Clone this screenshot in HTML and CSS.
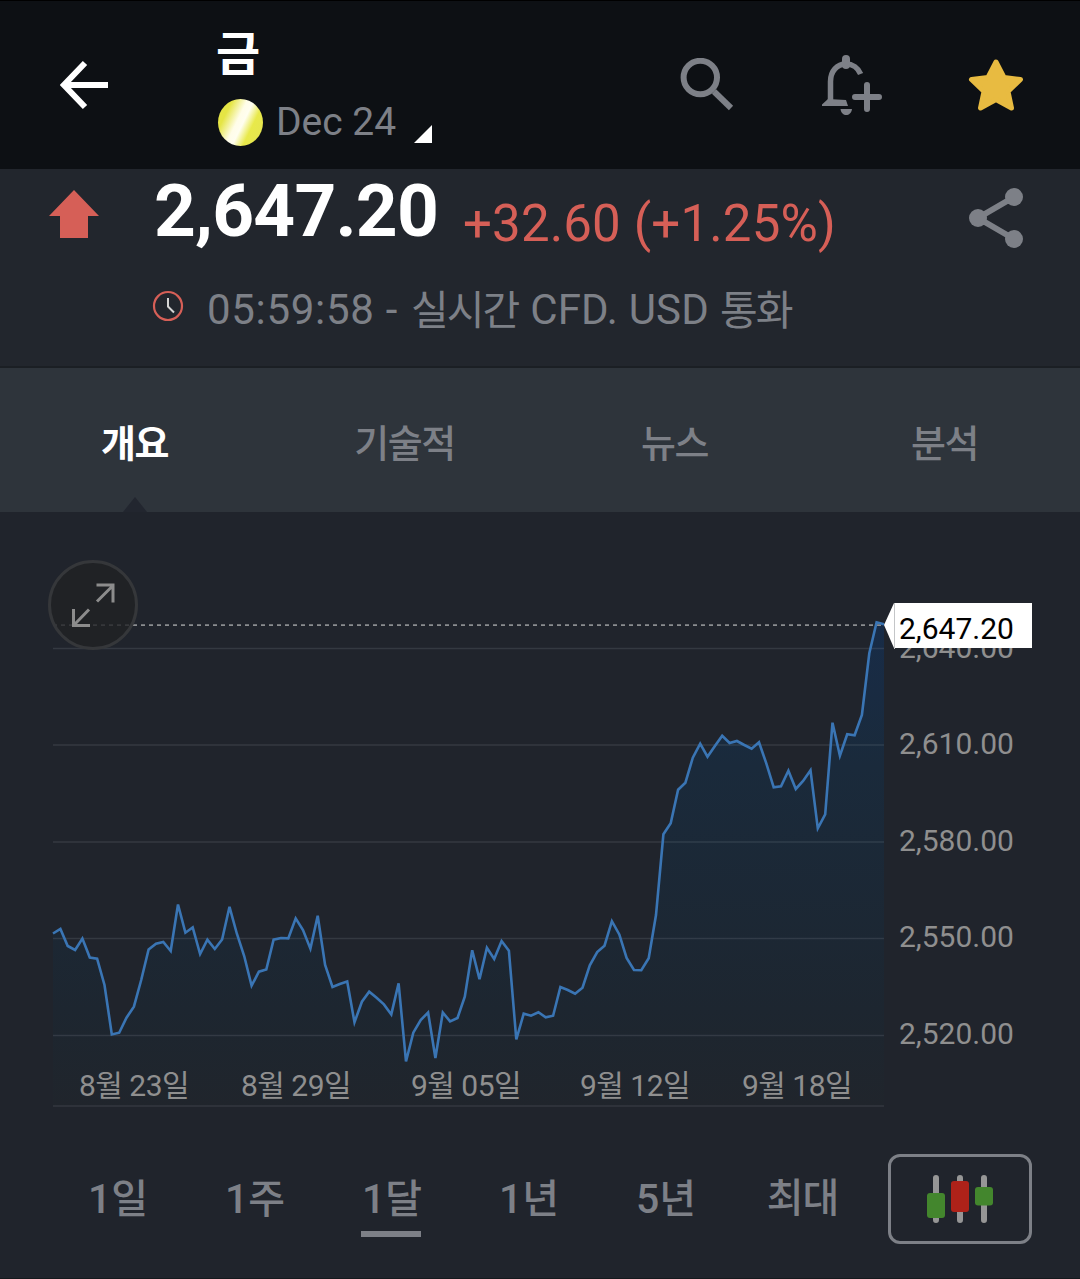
FILE: index.html
```
<!DOCTYPE html>
<html lang="ko">
<head>
    <meta charset="utf-8">
    <title>금 - Dec 24</title>
    <link rel="stylesheet" href="styles.css">
</head>
<body>
    <header class="topbar">
        <svg class="back" width="50" height="50" viewBox="0 0 50 50">
            <path d="M48 25H5M25 3L4 25l21 22" fill="none" stroke="#fff" stroke-width="6"/>
        </svg>
        <div class="instrument">
            <h1 class="name">금</h1>
            <div class="contract">
                <span class="coin"></span>
                <span class="month">Dec 24</span>
                <svg class="corner" width="18" height="18" viewBox="0 0 18 18"><path d="M18 0v18H0z" fill="#fff"/></svg>
            </div>
        </div>
        <div class="actions">
            <svg width="56" height="54" viewBox="0 0 56 54" fill="none" stroke="#7d8087">
                <circle cx="20.300" cy="19.500" r="16.700" stroke-width="6"/>
                <path d="M34 33.500L51 50" stroke-width="6"/>
            </svg>
            <svg class="bell" width="60" height="60" viewBox="0 0 60 60">
                <g fill="none" stroke="#7d8087">
                    <path d="M8.500 47V26.500C8.500 16 15 9 24 9c6.500 0 12.200 4 14.600 10" stroke-width="5.500"/>
                    <path d="M24 4v6" stroke-width="8" stroke-linecap="round"/>
                    <path d="M45 30v24M33 42h24" stroke-width="6" stroke-linecap="round"/>
                </g>
                <path d="M6 44L0 49.500V51h26l-2-6zM18.500 54h11.500c-1 8-10.500 8-11.500 0z" fill="#7d8087"/>
            </svg>
            <svg width="56" height="54" viewBox="0 0 56 54">
                <path d="M28 4l8 15.500 16.500 2-12.500 12 3.500 16.500-15.500-8.500-15.500 8.500L16 33.500l-12.500-12 16.500-2z" fill="#e8bb41" stroke="#e8bb41" stroke-width="5" stroke-linejoin="round"/>
            </svg>
        </div>
    </header>

    <section class="quote">
        <svg class="up" width="50" height="48" viewBox="0 0 50 48"><path d="M25 0l25 26H39v22H11V26H0z" fill="#d65f57"/></svg>
        <div class="quote-info">
            <div class="price-row">
                <span class="price">2,647.20</span>
                <span class="change">+32.60 (+1.25%)</span>
            </div>
            <div class="status">
                <svg class="clock" width="32" height="32" viewBox="0 0 32 32" fill="none">
                    <circle cx="16" cy="16" r="14" stroke="#d65f57" stroke-width="2.200"/>
                    <path d="M16 8v8.500l6 6" stroke="#d5d5d5" stroke-width="2"/>
                </svg>
                <span class="time">05:59:58 -</span>
                <span class="status-ko">실시간</span>
                <span class="ccy">CFD. USD</span>
                <span class="status-ko">통화</span>
            </div>
        </div>
        <svg class="share" width="54" height="60" viewBox="0 0 54 60">
            <path d="M45 9L9 30l36 21" fill="none" stroke="#7d8087" stroke-width="6"/>
            <g fill="#7d8087"><circle cx="45" cy="9" r="9"/><circle cx="9" cy="30" r="9"/><circle cx="45" cy="51" r="9"/></g>
        </svg>
    </section>

    <nav class="tabs">
        <a class="tab active">개요</a>
        <a class="tab">기술적</a>
        <a class="tab">뉴스</a>
        <a class="tab">분석</a>
    </nav>

    <main class="chart">
        <!-- user units are page pixels, the box starts under the tabs -->
        <svg class="plot" width="1080" height="618" viewBox="0 512 1080 618">
            <defs>
                <linearGradient id="area" gradientUnits="userSpaceOnUse" x1="0" y1="622" x2="0" y2="1106">
                    <stop offset="0" stop-color="#182c48"/>
                    <stop offset="0.300" stop-color="#1a2a3b"/>
                    <stop offset="0.800" stop-color="#1d2630"/>
                    <stop offset="1" stop-color="#20252c"/>
                </linearGradient>
            </defs>
            <path id="fill" fill="url(#area)"/>
            <path d="M53 648.500H884M53 745H884M53 842H884M53 938.500H884M53 1035.500H884" stroke="#a0aab4" stroke-opacity=".16" stroke-width="1.300"/>
            <path d="M53 1106H884" stroke="#2e323a" stroke-width="2"/>
            <path d="M53 625.200H884" stroke="#8b8d90" stroke-width="1.800" stroke-dasharray="4 4"/>
            <polyline id="line" fill="none" stroke="#3a75b4" stroke-width="2.600"/>
            <g class="axis">
                <text x="899" y="658">2,640.00</text>
                <text x="899" y="754">2,610.00</text>
                <text x="899" y="851">2,580.00</text>
                <text x="899" y="947">2,550.00</text>
                <text x="899" y="1044">2,520.00</text>
            </g>
            <g class="axis dates">
                <text x="134" y="1096">8월 23일</text>
                <text x="296" y="1096">8월 29일</text>
                <text x="466" y="1096">9월 05일</text>
                <text x="635" y="1096">9월 12일</text>
                <text x="797" y="1096">9월 18일</text>
            </g>
            <path d="M884 625l10-22h138v45H894z" fill="#fff"/>
            <path d="M894.500 603v46" stroke="#c4c6c8"/>
            <text class="last" x="899" y="639">2,647.20</text>
        </svg>
        <button class="expand">
            <svg width="44" height="44" viewBox="0 0 44 44" fill="none" stroke="#8c8c8c" stroke-width="3">
                <path d="M25.500 2H42V19.500M42 2.500L26 18.500M2.500 26v16.500H19M3 42l15-15.500"/>
            </svg>
        </button>
    </main>

    <div class="ranges">
        <a class="range"><span class="num">1</span>일</a>
        <a class="range"><span class="num">1</span>주</a>
        <a class="range selected"><span class="num">1</span>달</a>
        <a class="range"><span class="num">1</span>년</a>
        <a class="range"><span class="num">5</span>년</a>
        <a class="range">최대</a>
        <button class="candles">
            <svg width="68" height="50" viewBox="0 0 68 50">
                <path d="M10 4v42M34 4v42M58 4v42" stroke="#969696" stroke-width="6" stroke-linecap="round"/>
                <rect x="1" y="19" width="18" height="25" rx="3" fill="#43862d"/>
                <rect x="25" y="7" width="18" height="31" rx="3" fill="#ae2219"/>
                <rect x="49" y="13" width="18" height="18.500" rx="3" fill="#43862d"/>
            </svg>
        </button>
    </div>

    <script>
        const points = [
            933.5, 929, 946, 950, 938.5, 957.5, 958.7, 985, 1034.5, 1032.7, 1017.7, 1006.7,
            980, 949.5, 943.7, 942, 951, 904.5, 932.7, 927.5, 954, 939.7, 949, 939.5,
            906.8, 933.5, 956, 985.7, 971.7, 969.5, 939.7, 938, 938.4, 918.4, 930, 948.7,
            915.7, 965, 987, 984, 981.4, 1022.3, 1001.7, 991.7, 997.7, 1004.4, 1014.4, 983.3,
            1061.5, 1032.7, 1020, 1012.5, 1058, 1012.5, 1021.4, 1018, 996.7, 950.2, 979.3, 947.7,
            959, 941, 950.7, 1039.5, 1013.7, 1015.7, 1012.2, 1017.3, 1015.7, 987, 990, 993.7,
            987.7, 965.3, 952, 945.7, 921.2, 934.4, 958, 970, 970.2, 958.3, 915, 834.3,
            823.3, 789.7, 782.7, 757.7, 743.7, 756.7, 746, 735.7, 743, 741, 745, 748.7,
            742.3, 763.3, 787.3, 786.3, 770.7, 789, 781, 770.3, 828.3, 814.3, 722.7, 755.7,
            734.3, 735.3, 715, 653.3, 622.3, 624.3
        ];
        const step = 831 / (points.length - 1);
        const line = points.map((y, i) => `${(53 + i * step).toFixed(1)},${y}`).join(' ');

        document.getElementById('line').setAttribute('points', line);
        document.getElementById('fill').setAttribute('d', `M53,1106 L${line} L884,1106 Z`);
    </script>
</body>
</html>
```
FILE: styles.css
```
body {
    margin: 0;
    width: 1080px;
    height: 1279px;
    overflow: hidden;
    background: #20242c;
    font-family: Roboto, "Noto Sans CJK KR", sans-serif;
    color: #7d8087;
}

svg {
    display: block;
    flex: none;
}

button {
    padding: 0;
    box-sizing: border-box;
    display: flex;
    align-items: center;
    justify-content: center;
}

.topbar {
    height: 169px;
    box-sizing: border-box;
    border-top: 1px solid #000;
    background: #0d1014;
    display: flex;
    align-items: flex-start;
}

.back {
    margin: 59px 0 0 60px;
}

.instrument {
    margin-left: 106px;
    width: 465px;
}

.name {
    margin: 26px 0 0;
    height: 55px;
    line-height: 56px;
    font-size: 48px;
    font-weight: bold;
    color: #fff;
}

.contract {
    display: flex;
    align-items: center;
    height: 80px;
}

.coin {
    width: 45px;
    height: 47px;
    margin-left: 2px;
    border-radius: 50%;
    background: linear-gradient(116deg, #e5e545 22%, #fffde8 44%, #fffef0 54%, #e8e94a 70%, #e4e452);
}

.month {
    margin-left: 13px;
    font-size: 39px;
    line-height: 48px;
    width: 127px;
}

.corner {
    margin: 24px 0 0 11px;
}

.actions {
    display: flex;
    align-items: center;
    margin: 54px 0 0 -1px;
}

.actions .bell {
    margin: 0 86px 0 86px;
}

.quote {
    height: 199px;
    box-sizing: border-box;
    border-bottom: 2px solid #1b1f24;
    background: #22262d;
    display: flex;
    align-items: flex-start;
}

.up {
    margin: 21px 0 0 49px;
}

.quote-info {
    margin-left: 53px;
    width: 817px;
}

.price-row {
    display: flex;
    align-items: flex-start;
    height: 109px;
}

.price {
    width: 309px;
    padding-left: 2px;
    line-height: 84px;
    font-size: 73px;
    font-weight: bold;
    letter-spacing: -0.800px;
    color: #fff;
}

.change {
    padding-top: 25px;
    line-height: 60px;
    font-size: 51px;
    letter-spacing: 0.150px;
    color: #d65f57;
}

.status {
    display: flex;
    align-items: center;
    height: 56px;
    font-size: 42px;
    white-space: pre;
}

.time {
    margin: 7px 13px 0 23px;
    letter-spacing: 0.700px;
}

.status-ko {
    padding-top: 2px;
    letter-spacing: -2px;
    font-size: 41px;
}

.ccy {
    margin: 7px 11px 0 12px;
    letter-spacing: 0.200px;
}

.share {
    margin-top: 19px;
}

.tabs {
    height: 144px;
    background: #2e343b;
    display: flex;
}

.tab {
    flex: 1;
    position: relative;
    text-align: center;
    font-size: 38px;
    font-weight: 500;
    letter-spacing: -1.500px;
    line-height: 153px;
    height: 144px;
    text-indent: -1px;
}

.active {
    color: #fff;
    font-weight: bold;
}

.active::after {
    content: "";
    position: absolute;
    left: 123px;
    bottom: 0;
    border: 12px solid transparent;
    border-top: 0;
    border-bottom: 15px solid #22262f;
}

.chart {
    position: relative;
}

.axis {
    font-size: 30px;
    fill: #8f8f8f;
}

.dates {
    text-anchor: middle;
    letter-spacing: -0.500px;
}

.last {
    font-size: 30px;
    fill: #000;
}

.expand {
    position: absolute;
    left: 48px;
    top: 48px;
    width: 90px;
    height: 90px;
    border: 3px solid #35373a;
    border-radius: 50%;
    background: rgba(32, 34, 36, .8);
}

.ranges {
    height: 148px;
    border-bottom: 1px solid #15191d;
    padding-left: 49px;
    display: flex;
    align-items: flex-start;
}

.range {
    width: 137px;
    text-align: center;
    font-size: 40px;
    font-weight: 500;
    letter-spacing: -1px;
    line-height: 60px;
    margin-top: 39px;
}

.num {
    font-size: 41px;
    letter-spacing: 0;
}

.selected::after {
    content: "";
    display: block;
    width: 60px;
    height: 6px;
    margin: 1px 0 0 38px;
    background: #7d8087;
}

.candles {
    width: 144px;
    height: 90px;
    margin: 24px 0 0 17px;
    border: 3px solid #7d8087;
    border-radius: 12px;
    background: none;
}
```
